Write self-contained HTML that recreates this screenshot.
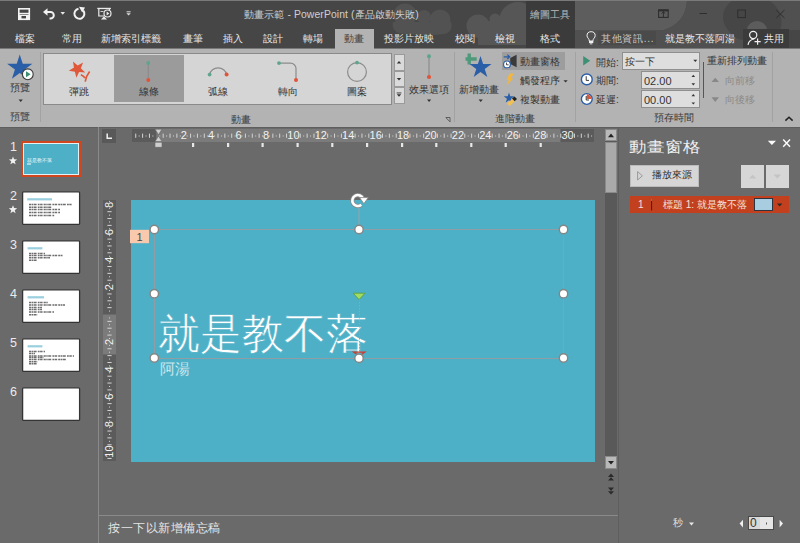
<!DOCTYPE html>
<html><head><meta charset="utf-8">
<style>
*{margin:0;padding:0;box-sizing:border-box}
html,body{width:800px;height:543px;overflow:hidden;background:#6a6a6a;font-family:"Liberation Sans",sans-serif}
.a{position:absolute;white-space:nowrap;line-height:1}
#title{position:absolute;left:0;top:0;width:800px;height:48px;background:#464646;overflow:hidden}
#ribbon{position:absolute;left:0;top:48px;width:800px;height:80px;background:#b3b3b3}
.tab{position:absolute;top:34px;font-size:10px;line-height:1;color:#e8e8e8;white-space:nowrap}
.rl{position:absolute;font-size:10px;line-height:1;color:#333;white-space:nowrap}
.gl{position:absolute;font-size:10px;line-height:1;color:#3a3a3a;white-space:nowrap}
.sep{position:absolute;width:1px;background:#a2a2a2}
.thumb{position:absolute;left:22px;width:58px;height:34px;background:#fff;border:1px solid #3a3a3a}
.num{position:absolute;left:10px;font-size:13px;line-height:1;color:#eaeaea}
svg{position:absolute;overflow:visible}
</style></head><body>
<!-- TITLE BAR -->
<div id="title">
  <svg width="800" height="48" style="left:0;top:0">
    <g fill="#525252">
      <circle cx="405" cy="15" r="11.5"/>
      <circle cx="424" cy="17" r="7"/>
      <circle cx="440" cy="20" r="10.5"/>
      <path d="M393 22 H451 C453 28 450 33 444 34 C430 36 410 35 398 33 C393 30 392 26 393 22Z"/>
    </g>
    <g fill="#565656">
      <circle cx="478" cy="26" r="11.5"/>
      <circle cx="495" cy="19" r="5.5"/>
      <circle cx="518" cy="21" r="19"/>
      <rect x="478" y="21" width="48" height="24"/>
    </g>
    <path d="M575 1 H687 C686 12 682 24 664 30 H575Z" fill="#5d5d5d"/>
    <path d="M575 30 H664 C682 24 686 12 687 1 H732 C722 8 720 20 728 30 C734 38 740 40 743 40 V48 H575Z" fill="#505050"/>
    <path d="M770 1 H800 V30 H780 C784 20 780 8 770 1Z" fill="#505050"/>
    <path d="M747 30 A10 9 0 0 1 767 30Z" fill="#5c5c5c"/>
    <rect x="0" y="0" width="800" height="1" fill="#7a7a7a"/>
    <!-- save -->
    <g fill="none" stroke="#f2f2f2" stroke-width="1.6">
      <rect x="18.8" y="8.8" width="10.5" height="10.5"/>
      <line x1="19" y1="13.6" x2="29" y2="13.6"/>
    </g>
    <rect x="19" y="15" width="10" height="4" fill="#f2f2f2"/>
    <rect x="21.5" y="16" width="4.5" height="2.4" fill="#454545"/>
    <!-- undo -->
    <path d="M45 12 H50.5 A3.3 3.3 0 0 1 50.5 18.6 H49.5" fill="none" stroke="#f2f2f2" stroke-width="2"/>
    <path d="M43 12 L47.5 8.2 V15.8Z" fill="#f2f2f2"/>
    <path d="M60.5 12 H65 L62.75 14.8Z" fill="#e8e8e8"/>
    <!-- repeat -->
    <path d="M83.2 10.5 A5 5 0 1 1 78.5 8.8" fill="none" stroke="#f2f2f2" stroke-width="2"/>
    <path d="M79 6.8 L85 7.6 L82.2 12.6Z" fill="#f2f2f2"/>
    <!-- present -->
    <rect x="97.3" y="7.8" width="13.6" height="1.3" fill="#eaeaea"/>
    <path d="M98.8 9 V16 H104 M109.4 9 V10.5" fill="none" stroke="#eaeaea" stroke-width="1.2"/>
    <path d="M104 16.2 L101 19.6 H107Z" fill="#eaeaea"/>
    <circle cx="107.5" cy="13.5" r="3.5" fill="#454545" stroke="#eaeaea" stroke-width="1.2"/>
    <path d="M106.6 11.6 L109.4 13.5 L106.6 15.4Z" fill="#eaeaea"/>
    <rect x="100.5" y="11" width="3" height="1" fill="#cfcfcf"/>
    <!-- qat dropdown -->
    <rect x="126.6" y="11.3" width="4" height="1" fill="#dedede"/>
    <path d="M126.4 13.2 H130.8 L128.6 15.6Z" fill="#dedede"/>
    <!-- window controls -->
    <rect x="658.6" y="9.8" width="9.6" height="7.6" fill="none" stroke="#2e2e2e" stroke-width="1.1"/>
    <rect x="658.6" y="9.8" width="9.6" height="1.6" fill="#2e2e2e"/>
    <path d="M663.4 11.5 V17 M661.5 13.6 L663.4 11.8 L665.3 13.6" fill="none" stroke="#2e2e2e" stroke-width="1"/>
    <rect x="699.5" y="13" width="7.5" height="1" fill="#2e2e2e"/>
    <rect x="737.8" y="10" width="7.6" height="7.6" fill="none" stroke="#2e2e2e" stroke-width="1"/>
    <path d="M776.3 10 L784.5 18 M784.5 10 L776.3 18" stroke="#2e2e2e" stroke-width="1"/>
    <!-- bulb -->
    <path d="M589.3 41 C589.3 38.5 587 37.8 587 35.8 A4.1 4.1 0 0 1 595.2 35.8 C595.2 37.8 592.9 38.5 592.9 41Z" fill="none" stroke="#f0f0f0" stroke-width="1"/>
    <rect x="589" y="41" width="4.3" height="2" fill="#f0f0f0"/>
    <rect x="589.8" y="43.2" width="2.6" height="1.2" fill="#c8c8c8"/>
  </svg>
  <div class="a" style="left:526px;top:1px;width:49px;height:47px;background:#3b3b3b"></div>
  <div class="a" style="left:335px;top:29px;width:39px;height:19px;background:#b3b3b3"></div>
  <div class="a" style="left:244px;top:10px;font-size:10.4px;letter-spacing:0.1px;color:#cfcfcf">動畫示範 - PowerPoint (產品啟動失敗)</div>
  <div class="a" style="left:530px;top:10px;font-size:10px;color:#bdbdbd">繪圖工具</div>
  <div class="tab" style="left:15px">檔案</div>
  <div class="tab" style="left:62px">常用</div>
  <div class="tab" style="left:101px">新增索引標籤</div>
  <div class="tab" style="left:183px">畫筆</div>
  <div class="tab" style="left:223px">插入</div>
  <div class="tab" style="left:263px">設計</div>
  <div class="tab" style="left:303px">轉場</div>
  <div class="tab" style="left:344px;color:#404040">動畫</div>
  <div class="tab" style="left:384px">投影片放映</div>
  <div class="tab" style="left:455px">校閱</div>
  <div class="tab" style="left:495px">檢視</div>
  <div class="tab" style="left:540px">格式</div>
  <div class="a" style="left:598px;top:31px;width:58px;height:14px;background:#4a4a4a"></div>
  <div class="tab" style="left:601px;color:#c8c8c8;letter-spacing:0.7px">其他資訊...</div>
  <div class="tab" style="left:665px">就是教不落阿湯</div>
  <div class="a" style="left:743px;top:29px;width:46px;height:19px;background:#3b3b3b"></div>
  <div class="tab" style="left:764px">共用</div>
  <svg width="20" height="20" style="left:745px;top:29px">
    <circle cx="8.2" cy="6" r="3.6" fill="none" stroke="#f0f0f0" stroke-width="1.2"/>
    <path d="M3 15.8 C3.6 12.4 6 10.4 9.2 10" fill="none" stroke="#f0f0f0" stroke-width="1.2"/>
    <path d="M12.6 9.6 V15.8 M9.5 12.7 H15.7" stroke="#f0f0f0" stroke-width="1.2"/>
  </svg>
</div>
<!-- RIBBON -->
<div id="ribbon">
  <div class="sep" style="left:40px;top:4px;height:70px"></div>
  <div class="a" style="left:43px;top:5px;width:349px;height:52px;background:#d5d5d5;border:1px solid #8a8a8a"></div>
  <div class="a" style="left:114px;top:7px;width:70px;height:47px;background:#9b9b9b"></div>
  <div class="a" style="left:394px;top:6px;width:11px;height:17px;background:#dadada;border:1px solid #9a9a9a"></div>
  <div class="a" style="left:394px;top:23px;width:11px;height:16px;background:#dadada;border:1px solid #9a9a9a"></div>
  <div class="a" style="left:394px;top:39px;width:11px;height:17px;background:#dadada;border:1px solid #9a9a9a"></div>
  <div class="rl" style="left:10px;top:35px">預覽</div>
  <div class="gl" style="left:10px;top:64px">預覽</div>
  <div class="rl" style="left:69px;top:39px">彈跳</div>
  <div class="rl" style="left:139px;top:39px">線條</div>
  <div class="rl" style="left:208px;top:39px">弧線</div>
  <div class="rl" style="left:278px;top:39px">轉向</div>
  <div class="rl" style="left:347px;top:39px">圖案</div>
  <div class="gl" style="left:231px;top:67px">動畫</div>
  <div class="rl" style="left:409px;top:37px">效果選項</div>
  <div class="sep" style="left:454px;top:4px;height:70px"></div>
  <div class="rl" style="left:459px;top:37px">新增動畫</div>
  <div class="a" style="left:502px;top:4px;width:63px;height:18px;background:#9d9d9d"></div>
  <div class="rl" style="left:520px;top:9px">動畫窗格</div>
  <div class="rl" style="left:520px;top:28px">觸發程序</div>
  <div class="rl" style="left:520px;top:47px">複製動畫</div>
  <div class="gl" style="left:495px;top:66px">進階動畫</div>
  <div class="sep" style="left:575px;top:4px;height:70px"></div>
  <div class="rl" style="left:596px;top:10px">開始:</div>
  <div class="rl" style="left:596px;top:28px">期間:</div>
  <div class="rl" style="left:596px;top:47px">延遲:</div>
  <div class="a" style="left:622px;top:4px;width:78px;height:18px;background:#dedede;border:1px solid #8f8f8f"></div>
  <div class="a" style="left:641px;top:23px;width:59px;height:18px;background:#dedede;border:1px solid #8f8f8f"></div>
  <div class="a" style="left:641px;top:42px;width:59px;height:18px;background:#dedede;border:1px solid #8f8f8f"></div>
  <div class="rl" style="left:625px;top:9px">按一下</div>
  <div class="rl" style="left:644px;top:28px;font-size:11px">02.00</div>
  <div class="rl" style="left:644px;top:47px;font-size:11px">00.00</div>
  <div class="sep" style="left:703px;top:14px;height:36px;background:#555"></div>
  <div class="rl" style="left:707px;top:8px">重新排列動畫</div>
  <div class="rl" style="left:725px;top:28px;color:#8a8a8a">向前移</div>
  <div class="rl" style="left:725px;top:47px;color:#8a8a8a">向後移</div>
  <div class="gl" style="left:654px;top:65px">預存時間</div>
  <div class="sep" style="left:772px;top:4px;height:70px"></div>
  <svg width="800" height="80" style="left:0;top:0">
    <!-- preview -->
    <path d="M19.75 54.60 L22.74 63.79 L32.40 63.79 L24.58 69.47 L27.57 78.66 L19.75 72.98 L11.93 78.66 L14.92 69.47 L7.10 63.79 L16.76 63.79Z" transform="translate(0,-48)" fill="#2a5ea6"/>
    <circle cx="27.8" cy="26.3" r="5.4" fill="#fafafa" stroke="#3a3a3a" stroke-width="1.1"/>
    <path d="M26 23.3 L30.6 26.3 L26 29.3Z" fill="#3b8d6f"/>
    <path d="M18.6 51.6 H22.8 L20.7 54Z" fill="#333"/>
    <!-- bounce -->
    <path d="M72.95 61.47 L77.68 65.42 L83.12 62.53 L80.82 68.25 L85.25 72.54 L79.10 72.12 L76.39 77.65 L74.89 71.68 L68.79 70.81 L74.01 67.54Z" transform="translate(0,-48)" fill="#e0583a"/>
    <path d="M80.8 26.8 C82.5 27.4 84 28.4 85 30 M89.6 23.4 C87.6 26 85.8 29.5 85.2 33.6" fill="none" stroke="#e0583a" stroke-width="1.7"/>
    <!-- line -->
    <line x1="148.3" y1="15" x2="148.3" y2="32" stroke="#8c8c8c" stroke-width="1.2"/>
    <circle cx="148.3" cy="15" r="1.9" fill="#5da58b"/>
    <circle cx="148.3" cy="32" r="2" fill="#e0543a"/>
    <!-- arc -->
    <path d="M209.6 26.6 A8.6 8 0 0 1 226.6 26.6" fill="none" stroke="#8c8c8c" stroke-width="1.2"/>
    <circle cx="209.6" cy="26.6" r="1.9" fill="#5da58b"/>
    <circle cx="226.6" cy="26.6" r="2" fill="#e0543a"/>
    <!-- turn -->
    <path d="M279 15.1 H290.5 A5.5 5.5 0 0 1 296 20.6 V32" fill="none" stroke="#8c8c8c" stroke-width="1.2"/>
    <circle cx="279" cy="15.1" r="1.9" fill="#5da58b"/>
    <circle cx="296" cy="32" r="2" fill="#e0543a"/>
    <!-- shape -->
    <circle cx="357" cy="24" r="9.4" fill="none" stroke="#8c8c8c" stroke-width="1.2"/>
    <circle cx="357" cy="14.6" r="1.9" fill="#5da58b"/>
    <!-- gallery scroll arrows -->
    <path d="M396.8 15.4 H401.2 L399 13Z" fill="#333"/>
    <path d="M396.8 30 H401.2 L399 32.4Z" fill="#333"/>
    <rect x="396.6" y="44.5" width="4.8" height="0.9" fill="#333"/>
    <path d="M396.8 46.3 H401.2 L399 48.7Z" fill="#333"/>
    <!-- effect options -->
    <line x1="429" y1="8.3" x2="429" y2="29" stroke="#8c8c8c" stroke-width="1.2"/>
    <circle cx="429" cy="8.3" r="2" fill="#5da58b"/>
    <circle cx="429" cy="29" r="2.1" fill="#e0543a"/>
    <path d="M427 51.6 H431.2 L429.1 54Z" fill="#333"/>
    <path d="M445.8 69.5 H450 V74 M446 69.8 L450 73.8" fill="none" stroke="#555" stroke-width="0.9"/>
    <!-- add animation -->
    <path d="M469.2 5.6 V16.6 M465.5 11 H476.7" stroke="#4e9a7a" stroke-width="3.4"/>
    <path d="M480.50 56.00 L483.10 64.02 L491.53 64.02 L484.71 68.97 L487.32 76.98 L480.50 72.03 L473.68 76.98 L476.29 68.97 L469.47 64.02 L477.90 64.02Z" transform="translate(0,-48)" fill="#2a5ea6"/>
    <path d="M478.6 51.6 H482.8 L480.7 54Z" fill="#333"/>
    <!-- animation pane icon -->
    <path d="M503.7 8.8 H509.5 M507.3 6.6 L509.7 8.8 L507.3 11" fill="none" stroke="#2a5ea6" stroke-width="1.2"/>
    <path d="M510.2 10 L516.6 6.8 V19.2 L510.2 16Z" fill="#3a3a3a"/>
    <circle cx="507" cy="16.4" r="3.4" fill="#fff" stroke="#2a5ea6" stroke-width="1.1"/>
    <path d="M506.5 14.6 V16.8 H508.6" fill="none" stroke="#222" stroke-width="0.8"/>
    <!-- trigger -->
    <path d="M509.4 25.5 L513.9 25.5 L510.8 30.6 L513.2 30.6 L506.4 37.8 L508.9 32.2 L506.8 32.2Z" fill="#f0b640"/>
    <path d="M563.5 32.2 H567.7 L565.6 34.6Z" fill="#333"/>
    <!-- animation painter -->
    <path d="M509.00 44.40 L510.26 48.27 L514.33 48.27 L511.03 50.66 L512.29 54.53 L509.00 52.14 L505.71 54.53 L506.97 50.66 L503.67 48.27 L507.74 48.27Z" fill="#2a5ea6"/>
    <path d="M507 55.6 L512.5 50.6 L515 53.2 L509.6 58Z" fill="#f2c057"/>
    <path d="M512 50.5 L514.5 48.4 L517 51 L514.6 53.2Z" fill="#222"/>
    <!-- timing -->
    <path d="M583.2 8.1 L590.2 12.75 L583.2 17.4Z" fill="#3d9173"/>
    <circle cx="586.8" cy="31.4" r="5.4" fill="#fff" stroke="#2a5ea6" stroke-width="1.4"/>
    <path d="M586.2 28.2 V32.4 H589" fill="none" stroke="#222" stroke-width="0.9"/>
    <circle cx="586.8" cy="51" r="5.4" fill="#fff" stroke="#2a5ea6" stroke-width="1.4"/>
    <path d="M586.8 51 V46.3 A4.7 4.7 0 0 1 591.5 51Z" fill="#d9573a"/>
    <path d="M586.2 48 V52 H589" fill="none" stroke="#222" stroke-width="0.9"/>
    <!-- combobox & spin arrows -->
    <path d="M693.3 11.8 H697.3 L695.3 14Z" fill="#333"/>
    <path d="M691.5 29 H695.1 L693.3 26.8Z" fill="#333"/>
    <path d="M691.5 35.2 H695.1 L693.3 37.4Z" fill="#333"/>
    <path d="M691.5 48.2 H695.1 L693.3 46Z" fill="#333"/>
    <path d="M691.5 54.4 H695.1 L693.3 56.6Z" fill="#333"/>
    <!-- move earlier/later -->
    <path d="M711.5 34.1 H719 L715.25 29.7Z" fill="#888888"/>
    <path d="M711.5 49.3 H719 L715.25 54Z" fill="#888888"/>
    <!-- collapse -->
    <path d="M785.4 72.6 L789 69.2 L792.6 72.6" fill="none" stroke="#222" stroke-width="1.5"/>
    <rect x="0" y="79" width="800" height="1" fill="#5e5e5e"/>
    <rect x="0" y="0" width="335" height="1" fill="#787878"/><rect x="374" y="0" width="426" height="1" fill="#787878"/>
  </svg>
</div>
<!-- LEFT PANEL -->
<div class="a" style="left:98px;top:127px;width:1px;height:416px;background:#8a8a8a"></div>
<svg width="100" height="543" style="left:0;top:0">
  <rect x="22" y="142" width="58" height="34" fill="#4db0c7" stroke="#d2461e" stroke-width="2"/>
  <rect x="23.5" y="143.5" width="55" height="31" fill="none" stroke="#dff3f8" stroke-width="1"/>
  <text x="26.6" y="161.8" font-size="5" fill="#f4fbfd" font-family="Liberation Sans">就是教不落</text>
  <rect x="27" y="163.4" width="4" height="1.2" fill="#e6f4f8"/>
  <g fill="#fff" stroke="#343434" stroke-width="1.3">
    <rect x="22.6" y="191.8" width="57" height="32.6" rx="1"/>
    <rect x="22.6" y="240.8" width="57" height="32.6" rx="1"/>
    <rect x="22.6" y="289.8" width="57" height="32.6" rx="1"/>
    <rect x="22.6" y="338.8" width="57" height="32.6" rx="1"/>
    <rect x="22.6" y="387.8" width="57" height="32.6" rx="1"/>
  </g>
  <rect x="27.2" y="198.2" width="24.8" height="2.2" fill="#9ad0de"/><line x1="29.0" y1="204.4" x2="71.6" y2="204.4" stroke="#6e6e6e" stroke-width="1.5" stroke-dasharray="2.2 0.5 1.4 0.5 3 1.2 1.8 0.5 2.5 1"/><line x1="29.0" y1="207.2" x2="52.0" y2="207.2" stroke="#6e6e6e" stroke-width="1.5" stroke-dasharray="2.2 0.5 1.4 0.5 3 1.2 1.8 0.5 2.5 1"/><line x1="29.0" y1="209.6" x2="60.0" y2="209.6" stroke="#6e6e6e" stroke-width="1.5" stroke-dasharray="2.2 0.5 1.4 0.5 3 1.2 1.8 0.5 2.5 1"/><line x1="29.0" y1="212.4" x2="60.0" y2="212.4" stroke="#6e6e6e" stroke-width="1.5" stroke-dasharray="2.2 0.5 1.4 0.5 3 1.2 1.8 0.5 2.5 1"/><line x1="29.0" y1="215.6" x2="54.4" y2="215.6" stroke="#6e6e6e" stroke-width="1.5" stroke-dasharray="2.2 0.5 1.4 0.5 3 1.2 1.8 0.5 2.5 1"/><rect x="27.6" y="247.2" width="14.799999999999997" height="2.2" fill="#9ad0de"/><line x1="29.0" y1="253.4" x2="45.0" y2="253.4" stroke="#6e6e6e" stroke-width="1.5" stroke-dasharray="2.2 0.5 1.4 0.5 3 1.2 1.8 0.5 2.5 1"/><line x1="29.0" y1="255.6" x2="63.0" y2="255.6" stroke="#6e6e6e" stroke-width="1.5" stroke-dasharray="2.2 0.5 1.4 0.5 3 1.2 1.8 0.5 2.5 1"/><line x1="29.0" y1="257.8" x2="50.0" y2="257.8" stroke="#6e6e6e" stroke-width="1.5" stroke-dasharray="2.2 0.5 1.4 0.5 3 1.2 1.8 0.5 2.5 1"/><line x1="29.0" y1="260.2" x2="37.0" y2="260.2" stroke="#6e6e6e" stroke-width="1.5" stroke-dasharray="2.2 0.5 1.4 0.5 3 1.2 1.8 0.5 2.5 1"/><rect x="27.6" y="296.2" width="16.4" height="2.2" fill="#9ad0de"/><line x1="29.0" y1="302.4" x2="48.0" y2="302.4" stroke="#6e6e6e" stroke-width="1.5" stroke-dasharray="2.2 0.5 1.4 0.5 3 1.2 1.8 0.5 2.5 1"/><line x1="29.0" y1="305.0" x2="65.0" y2="305.0" stroke="#6e6e6e" stroke-width="1.5" stroke-dasharray="2.2 0.5 1.4 0.5 3 1.2 1.8 0.5 2.5 1"/><line x1="29.0" y1="307.4" x2="42.0" y2="307.4" stroke="#6e6e6e" stroke-width="1.5" stroke-dasharray="2.2 0.5 1.4 0.5 3 1.2 1.8 0.5 2.5 1"/><line x1="29.0" y1="309.6" x2="42.0" y2="309.6" stroke="#6e6e6e" stroke-width="1.5" stroke-dasharray="2.2 0.5 1.4 0.5 3 1.2 1.8 0.5 2.5 1"/><line x1="29.0" y1="312.0" x2="54.0" y2="312.0" stroke="#6e6e6e" stroke-width="1.5" stroke-dasharray="2.2 0.5 1.4 0.5 3 1.2 1.8 0.5 2.5 1"/><line x1="29.0" y1="314.8" x2="38.0" y2="314.8" stroke="#6e6e6e" stroke-width="1.5" stroke-dasharray="2.2 0.5 1.4 0.5 3 1.2 1.8 0.5 2.5 1"/><rect x="27.6" y="345.2" width="14.799999999999997" height="2.2" fill="#9ad0de"/><line x1="29.0" y1="351.4" x2="45.0" y2="351.4" stroke="#6e6e6e" stroke-width="1.5" stroke-dasharray="2.2 0.5 1.4 0.5 3 1.2 1.8 0.5 2.5 1"/><line x1="29.0" y1="353.6" x2="35.0" y2="353.6" stroke="#6e6e6e" stroke-width="1.5" stroke-dasharray="2.2 0.5 1.4 0.5 3 1.2 1.8 0.5 2.5 1"/><line x1="29.0" y1="356.0" x2="74.0" y2="356.0" stroke="#6e6e6e" stroke-width="1.5" stroke-dasharray="2.2 0.5 1.4 0.5 3 1.2 1.8 0.5 2.5 1"/><line x1="29.0" y1="357.6" x2="44.0" y2="357.6" stroke="#6e6e6e" stroke-width="1.5" stroke-dasharray="2.2 0.5 1.4 0.5 3 1.2 1.8 0.5 2.5 1"/><line x1="29.0" y1="359.4" x2="67.0" y2="359.4" stroke="#6e6e6e" stroke-width="1.5" stroke-dasharray="2.2 0.5 1.4 0.5 3 1.2 1.8 0.5 2.5 1"/><line x1="29.0" y1="361.8" x2="38.0" y2="361.8" stroke="#6e6e6e" stroke-width="1.5" stroke-dasharray="2.2 0.5 1.4 0.5 3 1.2 1.8 0.5 2.5 1"/><line x1="29.0" y1="363.8" x2="37.0" y2="363.8" stroke="#6e6e6e" stroke-width="1.5" stroke-dasharray="2.2 0.5 1.4 0.5 3 1.2 1.8 0.5 2.5 1"/>
  <g fill="#eaeaea" font-family="Liberation Sans" font-size="12.5">
    <text x="10" y="150.6">1</text><text x="10" y="199.8">2</text><text x="10" y="248.8">3</text>
    <text x="10" y="297.8">4</text><text x="10" y="346.8">5</text><text x="10" y="395.8">6</text>
  </g>
  <path d="M13.00 156.40 L14.09 159.30 L17.18 159.44 L14.76 161.37 L15.59 164.36 L13.00 162.65 L10.41 164.36 L11.24 161.37 L8.82 159.44 L11.91 159.30Z M13.00 205.20 L14.09 208.10 L17.18 208.24 L14.76 210.17 L15.59 213.16 L13.00 211.45 L10.41 213.16 L11.24 210.17 L8.82 208.24 L11.91 208.10Z" fill="#f0f0f0"/>
</svg>
<!-- RULERS -->
<svg width="800" height="543" style="left:0;top:0">
  <rect x="102" y="129" width="14" height="14" fill="#595959"/>
  <path d="M107.2 133.6 V138.3 H112" fill="none" stroke="#f0f0f0" stroke-width="1.5"/>
  <rect x="132" y="129" width="462" height="13" fill="#7b7b7b"/>
  <rect x="132" y="129" width="24.3" height="13" fill="#5b5b5b"/>
  <rect x="560.5" y="129" width="33.5" height="13" fill="#5b5b5b"/>
  <g fill="#d4d4d4"><rect x="135.24" y="133.6" width="1" height="4.2"/><rect x="138.66" y="135.5" width="1" height="1"/><rect x="142.09" y="133.6" width="1" height="4.2"/><rect x="145.52" y="135.5" width="1" height="1"/><rect x="148.95" y="133.6" width="1" height="4.2"/><rect x="152.37" y="135.5" width="1" height="1"/><rect x="159.23" y="135.5" width="1" height="1"/><rect x="162.66" y="133.6" width="1" height="4.2"/><rect x="166.08" y="135.5" width="1" height="1"/><rect x="169.51" y="133.6" width="1" height="4.2"/><rect x="172.94" y="135.5" width="1" height="1"/><rect x="176.37" y="133.6" width="1" height="4.2"/><rect x="179.79" y="135.5" width="1" height="1"/><rect x="186.65" y="135.5" width="1" height="1"/><rect x="190.08" y="133.6" width="1" height="4.2"/><rect x="193.50" y="135.5" width="1" height="1"/><rect x="196.93" y="133.6" width="1" height="4.2"/><rect x="200.36" y="135.5" width="1" height="1"/><rect x="203.79" y="133.6" width="1" height="4.2"/><rect x="207.21" y="135.5" width="1" height="1"/><rect x="214.07" y="135.5" width="1" height="1"/><rect x="217.50" y="133.6" width="1" height="4.2"/><rect x="220.92" y="135.5" width="1" height="1"/><rect x="224.35" y="133.6" width="1" height="4.2"/><rect x="227.78" y="135.5" width="1" height="1"/><rect x="231.21" y="133.6" width="1" height="4.2"/><rect x="234.63" y="135.5" width="1" height="1"/><rect x="241.49" y="135.5" width="1" height="1"/><rect x="244.92" y="133.6" width="1" height="4.2"/><rect x="248.34" y="135.5" width="1" height="1"/><rect x="251.77" y="133.6" width="1" height="4.2"/><rect x="255.20" y="135.5" width="1" height="1"/><rect x="258.62" y="133.6" width="1" height="4.2"/><rect x="262.05" y="135.5" width="1" height="1"/><rect x="268.91" y="135.5" width="1" height="1"/><rect x="272.34" y="133.6" width="1" height="4.2"/><rect x="275.76" y="135.5" width="1" height="1"/><rect x="279.19" y="133.6" width="1" height="4.2"/><rect x="282.62" y="135.5" width="1" height="1"/><rect x="286.05" y="133.6" width="1" height="4.2"/><rect x="289.47" y="135.5" width="1" height="1"/><rect x="296.33" y="135.5" width="1" height="1"/><rect x="299.75" y="133.6" width="1" height="4.2"/><rect x="303.18" y="135.5" width="1" height="1"/><rect x="306.61" y="133.6" width="1" height="4.2"/><rect x="310.04" y="135.5" width="1" height="1"/><rect x="313.47" y="133.6" width="1" height="4.2"/><rect x="316.89" y="135.5" width="1" height="1"/><rect x="323.75" y="135.5" width="1" height="1"/><rect x="327.18" y="133.6" width="1" height="4.2"/><rect x="330.60" y="135.5" width="1" height="1"/><rect x="334.03" y="133.6" width="1" height="4.2"/><rect x="337.46" y="135.5" width="1" height="1"/><rect x="340.88" y="133.6" width="1" height="4.2"/><rect x="344.31" y="135.5" width="1" height="1"/><rect x="351.17" y="135.5" width="1" height="1"/><rect x="354.60" y="133.6" width="1" height="4.2"/><rect x="358.02" y="135.5" width="1" height="1"/><rect x="361.45" y="133.6" width="1" height="4.2"/><rect x="364.88" y="135.5" width="1" height="1"/><rect x="368.31" y="133.6" width="1" height="4.2"/><rect x="371.73" y="135.5" width="1" height="1"/><rect x="378.59" y="135.5" width="1" height="1"/><rect x="382.01" y="133.6" width="1" height="4.2"/><rect x="385.44" y="135.5" width="1" height="1"/><rect x="388.87" y="133.6" width="1" height="4.2"/><rect x="392.30" y="135.5" width="1" height="1"/><rect x="395.73" y="133.6" width="1" height="4.2"/><rect x="399.15" y="135.5" width="1" height="1"/><rect x="406.01" y="135.5" width="1" height="1"/><rect x="409.44" y="133.6" width="1" height="4.2"/><rect x="412.86" y="135.5" width="1" height="1"/><rect x="416.29" y="133.6" width="1" height="4.2"/><rect x="419.72" y="135.5" width="1" height="1"/><rect x="423.15" y="133.6" width="1" height="4.2"/><rect x="426.57" y="135.5" width="1" height="1"/><rect x="433.43" y="135.5" width="1" height="1"/><rect x="436.86" y="133.6" width="1" height="4.2"/><rect x="440.28" y="135.5" width="1" height="1"/><rect x="443.71" y="133.6" width="1" height="4.2"/><rect x="447.14" y="135.5" width="1" height="1"/><rect x="450.57" y="133.6" width="1" height="4.2"/><rect x="453.99" y="135.5" width="1" height="1"/><rect x="460.85" y="135.5" width="1" height="1"/><rect x="464.28" y="133.6" width="1" height="4.2"/><rect x="467.70" y="135.5" width="1" height="1"/><rect x="471.13" y="133.6" width="1" height="4.2"/><rect x="474.56" y="135.5" width="1" height="1"/><rect x="477.99" y="133.6" width="1" height="4.2"/><rect x="481.41" y="135.5" width="1" height="1"/><rect x="488.27" y="135.5" width="1" height="1"/><rect x="491.70" y="133.6" width="1" height="4.2"/><rect x="495.12" y="135.5" width="1" height="1"/><rect x="498.55" y="133.6" width="1" height="4.2"/><rect x="501.98" y="135.5" width="1" height="1"/><rect x="505.41" y="133.6" width="1" height="4.2"/><rect x="508.83" y="135.5" width="1" height="1"/><rect x="515.69" y="135.5" width="1" height="1"/><rect x="519.12" y="133.6" width="1" height="4.2"/><rect x="522.54" y="135.5" width="1" height="1"/><rect x="525.97" y="133.6" width="1" height="4.2"/><rect x="529.40" y="135.5" width="1" height="1"/><rect x="532.83" y="133.6" width="1" height="4.2"/><rect x="536.25" y="135.5" width="1" height="1"/><rect x="543.11" y="135.5" width="1" height="1"/><rect x="546.54" y="133.6" width="1" height="4.2"/><rect x="549.96" y="135.5" width="1" height="1"/><rect x="553.39" y="133.6" width="1" height="4.2"/><rect x="556.82" y="135.5" width="1" height="1"/><rect x="560.25" y="133.6" width="1" height="4.2"/><rect x="563.67" y="135.5" width="1" height="1"/><rect x="570.53" y="135.5" width="1" height="1"/><rect x="573.96" y="133.6" width="1" height="4.2"/><rect x="577.38" y="135.5" width="1" height="1"/><rect x="580.81" y="133.6" width="1" height="4.2"/><rect x="584.24" y="135.5" width="1" height="1"/><rect x="587.66" y="133.6" width="1" height="4.2"/><rect x="591.09" y="135.5" width="1" height="1"/></g>
  <g fill="#f2f2f2" font-family="Liberation Sans" font-size="11" text-anchor="middle"><text x="183.72" y="139.2">2</text><text x="211.14" y="139.2">4</text><text x="238.56" y="139.2">6</text><text x="265.98" y="139.2">8</text><text x="293.40" y="139.2">10</text><text x="320.82" y="139.2">12</text><text x="348.24" y="139.2">14</text><text x="375.66" y="139.2">16</text><text x="403.08" y="139.2">18</text><text x="430.50" y="139.2">20</text><text x="457.92" y="139.2">22</text><text x="485.34" y="139.2">24</text><text x="512.76" y="139.2">26</text><text x="540.18" y="139.2">28</text><text x="567.60" y="139.2">30</text></g>
  <g fill="#e8e8e8"><rect x="192.0" y="143" width="2.2" height="4"/><rect x="227.0" y="143" width="2.2" height="4"/><rect x="261.5" y="143" width="2.2" height="4"/><rect x="296.5" y="143" width="2.2" height="4"/><rect x="331.2" y="143" width="2.2" height="4"/><rect x="366.0" y="143" width="2.2" height="4"/><rect x="401.0" y="143" width="2.2" height="4"/><rect x="435.2" y="143" width="2.2" height="4"/><rect x="470.2" y="143" width="2.2" height="4"/><rect x="504.6" y="143" width="2.2" height="4"/><rect x="539.6" y="143" width="2.2" height="4"/></g>
  <path d="M155 129.2 H162 L158.5 134.8Z M155 141.6 L158.5 136 L162 141.6Z" fill="#cfcfcf" stroke="#666" stroke-width="0.6"/>
  <rect x="155" y="142.2" width="7" height="5" fill="#cfcfcf" stroke="#666" stroke-width="0.6"/>
  <rect x="103" y="200" width="13" height="261" fill="#5b5b5b"/>
  <rect x="103" y="314.5" width="13" height="40" fill="#7b7b7b"/>
  <g fill="#d4d4d4"><rect x="109" y="200.89" width="1" height="1"/><rect x="109" y="207.75" width="1" height="1"/><rect x="107.4" y="211.18" width="4.2" height="1"/><rect x="109" y="214.60" width="1" height="1"/><rect x="107.4" y="218.03" width="4.2" height="1"/><rect x="109" y="221.46" width="1" height="1"/><rect x="107.4" y="224.88" width="4.2" height="1"/><rect x="109" y="228.31" width="1" height="1"/><rect x="109" y="235.17" width="1" height="1"/><rect x="107.4" y="238.59" width="4.2" height="1"/><rect x="109" y="242.02" width="1" height="1"/><rect x="107.4" y="245.45" width="4.2" height="1"/><rect x="109" y="248.88" width="1" height="1"/><rect x="107.4" y="252.31" width="4.2" height="1"/><rect x="109" y="255.73" width="1" height="1"/><rect x="109" y="262.59" width="1" height="1"/><rect x="107.4" y="266.01" width="4.2" height="1"/><rect x="109" y="269.44" width="1" height="1"/><rect x="107.4" y="272.87" width="4.2" height="1"/><rect x="109" y="276.30" width="1" height="1"/><rect x="107.4" y="279.73" width="4.2" height="1"/><rect x="109" y="283.15" width="1" height="1"/><rect x="109" y="290.01" width="1" height="1"/><rect x="107.4" y="293.44" width="4.2" height="1"/><rect x="109" y="296.86" width="1" height="1"/><rect x="107.4" y="300.29" width="4.2" height="1"/><rect x="109" y="303.72" width="1" height="1"/><rect x="107.4" y="307.14" width="4.2" height="1"/><rect x="109" y="310.57" width="1" height="1"/><rect x="109" y="317.43" width="1" height="1"/><rect x="107.4" y="320.86" width="4.2" height="1"/><rect x="109" y="324.28" width="1" height="1"/><rect x="107.4" y="327.71" width="4.2" height="1"/><rect x="109" y="331.14" width="1" height="1"/><rect x="107.4" y="334.56" width="4.2" height="1"/><rect x="109" y="337.99" width="1" height="1"/><rect x="109" y="344.85" width="1" height="1"/><rect x="107.4" y="348.27" width="4.2" height="1"/><rect x="109" y="351.70" width="1" height="1"/><rect x="107.4" y="355.13" width="4.2" height="1"/><rect x="109" y="358.56" width="1" height="1"/><rect x="107.4" y="361.99" width="4.2" height="1"/><rect x="109" y="365.41" width="1" height="1"/><rect x="109" y="372.27" width="1" height="1"/><rect x="107.4" y="375.69" width="4.2" height="1"/><rect x="109" y="379.12" width="1" height="1"/><rect x="107.4" y="382.55" width="4.2" height="1"/><rect x="109" y="385.98" width="1" height="1"/><rect x="107.4" y="389.40" width="4.2" height="1"/><rect x="109" y="392.83" width="1" height="1"/><rect x="109" y="399.69" width="1" height="1"/><rect x="107.4" y="403.12" width="4.2" height="1"/><rect x="109" y="406.54" width="1" height="1"/><rect x="107.4" y="409.97" width="4.2" height="1"/><rect x="109" y="413.40" width="1" height="1"/><rect x="107.4" y="416.82" width="4.2" height="1"/><rect x="109" y="420.25" width="1" height="1"/><rect x="109" y="427.11" width="1" height="1"/><rect x="107.4" y="430.54" width="4.2" height="1"/><rect x="109" y="433.96" width="1" height="1"/><rect x="107.4" y="437.39" width="4.2" height="1"/><rect x="109" y="440.82" width="1" height="1"/><rect x="107.4" y="444.25" width="4.2" height="1"/><rect x="109" y="447.67" width="1" height="1"/><rect x="109" y="454.53" width="1" height="1"/><rect x="107.4" y="457.96" width="4.2" height="1"/></g>
  <g fill="#f2f2f2" font-family="Liberation Sans" font-size="11" text-anchor="middle"><text transform="translate(113.2 204.82) rotate(-90)" x="0" y="0">8</text><text transform="translate(113.2 232.24) rotate(-90)" x="0" y="0">6</text><text transform="translate(113.2 259.66) rotate(-90)" x="0" y="0">4</text><text transform="translate(113.2 287.08) rotate(-90)" x="0" y="0">2</text><text transform="translate(113.2 341.92) rotate(-90)" x="0" y="0">2</text><text transform="translate(113.2 369.34) rotate(-90)" x="0" y="0">4</text><text transform="translate(113.2 396.76) rotate(-90)" x="0" y="0">6</text><text transform="translate(113.2 424.18) rotate(-90)" x="0" y="0">8</text><text transform="translate(113.2 451.60) rotate(-90)" x="0" y="0">10</text></g>
</svg>
<!-- SLIDE -->
<div class="a" style="left:131px;top:200px;width:464px;height:262px;background:#4db0c7"></div>
<div class="a" style="left:158px;top:313px;font-size:42px;color:#fff;-webkit-text-stroke:0.6px #4db0c7">就是教不落</div>
<div class="a" style="left:160px;top:361px;font-size:15px;color:#fff;-webkit-text-stroke:0.3px #4db0c7">阿湯</div>
<svg width="800" height="543" style="left:0;top:0">
  <rect x="154.5" y="229.5" width="409" height="129" fill="none" stroke="#8f9ea4" stroke-width="1"/>
  <line x1="359" y1="207" x2="359" y2="226" stroke="#9aa4a8" stroke-width="1"/>
  <line x1="359.5" y1="299" x2="359.5" y2="352" stroke="#9aa4a8" stroke-width="1" stroke-dasharray="1.5 1.5"/>
  <rect x="130" y="229.8" width="19" height="13.4" fill="#f9c9ad"/>
  <text x="136.5" y="241" font-family="Liberation Sans" font-size="11" fill="#4a4a4a">1</text>
  <g fill="#ffffff" stroke="#858585" stroke-width="1.4">
    <circle cx="154.3" cy="229.5" r="4.2"/><circle cx="359" cy="229.5" r="4.2"/><circle cx="563.5" cy="229.5" r="4.2"/>
    <circle cx="154.3" cy="293.7" r="4.2"/><circle cx="563.5" cy="293.7" r="4.2"/>
    <circle cx="154.3" cy="358" r="4.2"/><circle cx="563.5" cy="358" r="4.2"/>
  </g>
  <path d="M353.6 352.2 H364.8 L359.2 356Z" fill="none" stroke="#d23a2a" stroke-width="1.2"/>
  <circle cx="359" cy="358.3" r="4.2" fill="#fff" stroke="#858585" stroke-width="1.4"/>
  <path d="M353.2 293.2 H365 L359.1 299.6Z" fill="#a3dc62" stroke="#5aa030" stroke-width="0.8"/>
  <path d="M363 198.7 A5.5 5.5 0 1 0 361.3 204.8" fill="none" stroke="#8a8a8a" stroke-width="4.2"/>
  <path d="M363 198.7 A5.5 5.5 0 1 0 361.3 204.8" fill="none" stroke="#fff" stroke-width="2.6"/>
  <path d="M359.6 197.6 L368.2 197.6 L363.9 203.8Z" fill="#fff" stroke="#8a8a8a" stroke-width="0.9"/>
</svg>
<!-- SCROLL -->
<div class="a" style="left:605px;top:129px;width:12px;height:340px;background:#595959"></div>
<div class="a" style="left:605px;top:129px;width:12px;height:12px;background:#b9b9b9;border:1px solid #8a8a8a"></div>
<div class="a" style="left:605px;top:142px;width:12px;height:51px;background:#aaaaaa;border:1px solid #8a8a8a"></div>
<div class="a" style="left:605px;top:456px;width:12px;height:13px;background:#b9b9b9;border:1px solid #8a8a8a"></div>
<div class="a" style="left:618px;top:127px;width:1px;height:416px;background:#5e5e5e"></div>
<div class="a" style="left:99px;top:515px;width:519px;height:1px;background:#8a8a8a"></div>
<div class="a" style="left:108px;top:522px;font-size:12.4px;letter-spacing:0.55px;color:#e6e6e6">按一下以新增備忘稿</div>
<!-- RIGHT PANE -->
<div class="a" style="left:629px;top:139px;font-size:18px;color:#f0f0f0;transform:scaleY(0.86);transform-origin:0 0">動畫窗格</div>
<div class="a" style="left:630px;top:165px;width:69px;height:22px;background:#d6d6d6;border:1px solid #bcbcbc"></div>
<div class="a" style="left:652px;top:170px;font-size:10.2px;color:#333">播放來源</div>
<div class="a" style="left:741px;top:165px;width:23px;height:23px;background:#d6d6d6"></div>
<div class="a" style="left:766px;top:165px;width:23px;height:23px;background:#d6d6d6"></div>
<div class="a" style="left:630px;top:196px;width:159px;height:17px;background:#c3401f"></div>
<div class="a" style="left:754px;top:198px;width:19px;height:13px;background:#a8cce0;border:1px solid #2c3440"></div>
<div class="a" style="left:663px;top:200px;font-size:10px;color:#f5e0d8">標題 1: 就是教不落</div>
<div class="a" style="left:638px;top:200px;font-size:10px;color:#f5e0d8">1</div>
<div class="a" style="left:673px;top:518px;font-size:10px;color:#e0e0e0">秒</div>
<div class="a" style="left:748px;top:516px;width:26px;height:14px;background:#d8d8d8;border:1px solid #4a4a4a"></div>
<div class="a" style="left:760px;top:517px;width:13px;height:12px;background:#e6e6e6"></div>
<div class="a" style="left:750px;top:517px;font-size:12px;color:#333">0</div>
<svg width="800" height="543" style="left:0;top:0">
  <path d="M608 137.2 H614 L611 133.6Z" fill="#222"/>
  <path d="M608 461 H614 L611 464.6Z" fill="#222"/>
  <path d="M608 477 H614 L611 473.6Z M608 480.6 H614 L611 477.2Z" fill="#2a2a2a"/>
  <path d="M608 487.6 L611 491 L614 487.6Z M608 491.2 L611 494.6 L614 491.2Z" fill="#2a2a2a"/>
  <path d="M637.6 171.6 L642.4 175.8 L637.6 180Z" fill="none" stroke="#9a9a9a" stroke-width="1"/>
  <path d="M749 178.6 H756.4 L752.7 174.8Z" fill="#c4c4c4"/>
  <path d="M773.6 174.6 H781 L777.3 178.4Z" fill="#c4c4c4"/>
  <rect x="651" y="200" width="1.1" height="10.5" fill="#3a2a20"/>
  <rect x="651" y="199" width="1.1" height="2" fill="#3ea040"/>
  <path d="M777 203.6 H782.4 L779.7 206.4Z" fill="#2a2a2a"/>
  <path d="M767.8 140.8 H776 L771.9 145Z" fill="#fafafa"/>
  <path d="M783.2 139.6 L790 146.8 M790 139.6 L783.2 146.8" stroke="#fafafa" stroke-width="1.5"/>
  <path d="M689 522.6 H694 L691.5 525.4Z" fill="#e8e8e8"/>
  <path d="M743 519.8 V527.4 L739.6 523.6Z" fill="#f0f0f0"/>
  <path d="M779.6 519.8 V527.4 L783 523.6Z" fill="#f0f0f0"/>
  <rect x="766" y="522.5" width="1" height="2" fill="#555"/>
</svg>
</body></html>
